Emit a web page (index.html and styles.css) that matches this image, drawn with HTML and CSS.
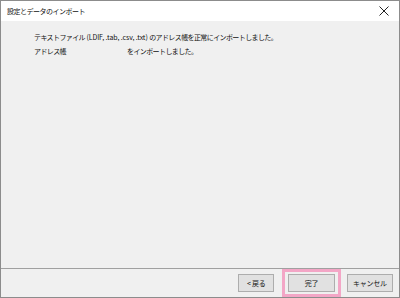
FILE: index.html
```html
<!DOCTYPE html>
<html lang="ja">
<head>
<meta charset="utf-8">
<link rel="stylesheet" href="styles.css">
</head>
<body>
<div class="window">
  <div class="titlebar">
    <span class="title">設定とデータのインポート</span>
    <svg class="close" width="10" height="10" viewBox="0 0 10 10"><path d="M0.5 0.5 L9.5 9.5 M9.5 0.5 L0.5 9.5" stroke="#222" stroke-width="1" fill="none"/></svg>
  </div>
  <div class="content">
    <p class="line">テキストファイル<span class="latin"> (LDIF, .tab, .csv, .txt) </span>のアドレス帳を正常にインポートしました。</p>
    <p class="line line2"><span class="name">アドレス帳</span><span>をインポートしました。</span></p>
  </div>
  <div class="footer">
    <button class="btn back">&lt; 戻る</button>
    <div class="highlight"><button class="btn done">完了</button></div>
    <button class="btn cancel">キャンセル</button>
  </div>
</div>
</body>
</html>
```
FILE: styles.css
```css
html, body {
  margin: 0;
  padding: 0;
  width: 400px;
  height: 298px;
  overflow: hidden;
  background: #f0f0f0;
}
.window {
  box-sizing: border-box;
  width: 400px;
  height: 298px;
  border: 1px solid #8c8c8c;
  display: flex;
  flex-direction: column;
  background: #f0f0f0;
  font-family: "Noto Sans CJK JP", "Noto Sans", sans-serif;
  color: #000;
}
.titlebar {
  height: 20px;
  background: #fff;
  display: flex;
  align-items: center;
  justify-content: space-between;
  padding: 0 10px 0 6px;
  flex: none;
}
.title {
  font-size: 7px;
  letter-spacing: -0.5px;
  color: #111;
}
.content {
  flex: 1;
  padding: 12px 0 0 33px;
}
.line {
  margin: 0 0 5px 0;
  font-size: 7px;
  letter-spacing: -0.6px;
  line-height: 9px;
  color: #111;
}
.latin {
  letter-spacing: -0.1px;
}
.name {
  display: inline-block;
  width: 93px;
}
.footer {
  flex: none;
  height: 28px;
  border-top: 1px solid #a0a0a0;
  display: flex;
  align-items: center;
  padding: 0 6px 0 237px;
}
.btn {
  box-sizing: border-box;
  height: 18px;
  background: #e1e1e1;
  border: 1px solid #adadad;
  font-family: "Noto Sans CJK JP", sans-serif;
  font-size: 7px;
  letter-spacing: -0.3px;
  padding: 0;
  color: #111;
}
.back { width: 37px; }
.highlight {
  box-sizing: border-box;
  margin-left: 8px;
  width: 59px;
  height: 28px;
  border: 3px solid #f3a6c6;
  display: flex;
  align-items: center;
  justify-content: center;
}
.done { width: 47px; }
.cancel { width: 47px; margin-left: 6px; }
```
